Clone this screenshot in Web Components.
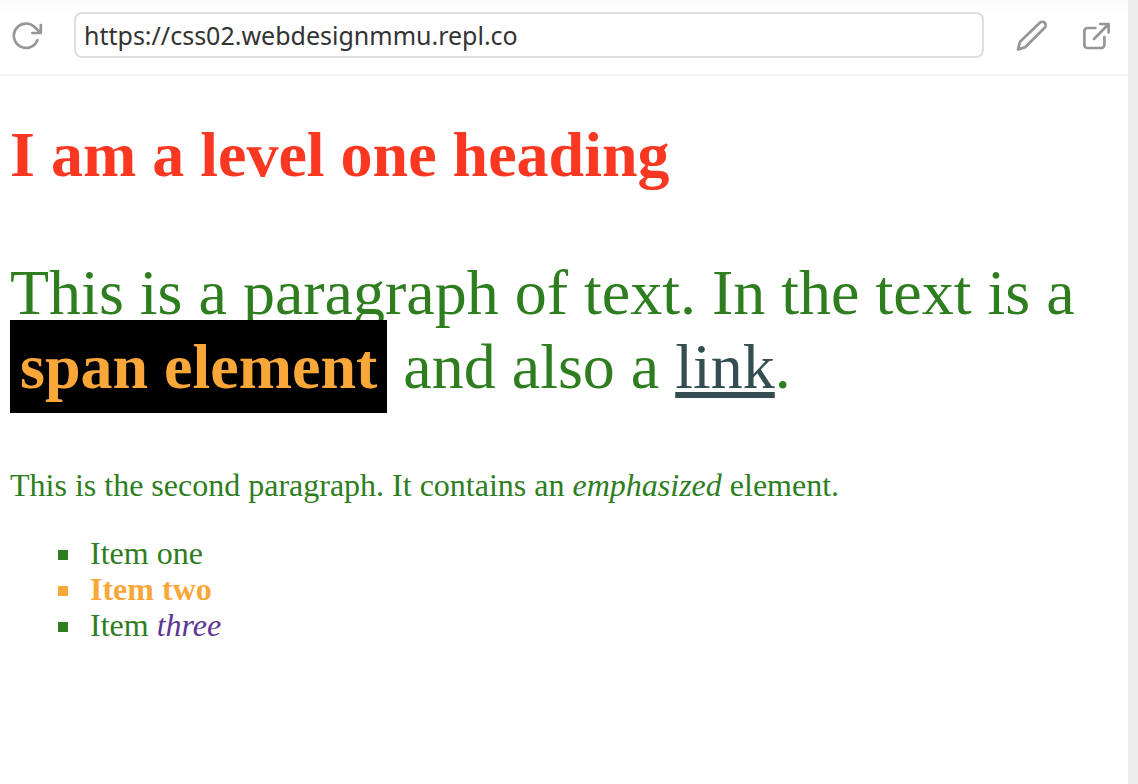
<!DOCTYPE html>
<html lang="en">
<head>
<meta charset="utf-8">
<title>Web preview</title>
<style>
html,body{margin:0;height:100%;background:#fff}
</style>
</head>
<body>
<preview-window>
  <address-bar slot="bar"></address-bar>
  <sample-document></sample-document>
</preview-window>
<script>
class PreviewWindow extends HTMLElement{
  constructor(){
    super();
    this.attachShadow({mode:'open'}).innerHTML=`
<style>
:host{display:flex;flex-direction:column;box-sizing:border-box;min-height:100vh;background:#fff;border-right:10px solid #ececec}
main{flex:1}
</style>
<slot name="bar"></slot><main><slot></slot></main>`;
  }
}
class AddressBar extends HTMLElement{
  constructor(){
    super();
    this.attachShadow({mode:'open'}).innerHTML=`
<style>
:host{display:block;border-bottom:2px solid #f2f2f2;background:linear-gradient(#fbfbfb,#fff 16px)}
form{display:flex;align-items:center;height:74px;box-sizing:border-box;padding:0 16px 4px 10px;margin:0}
input{flex:1;min-width:0;box-sizing:border-box;height:46px;margin:0 32px 0 30px;padding:0 8px;border:2px solid #dedede;border-radius:8px;background:#fff;color:#333;font:25px/40px "Noto Sans",sans-serif;outline:none}
button{display:flex;flex:none;padding:0;border:0;background:none;color:#969696}
.edit{margin-right:32px}
svg{display:block;fill:none;stroke:currentColor;stroke-width:2.7;stroke-linecap:round;stroke-linejoin:round}
</style>
<form>
<button type="button" aria-label="Reload"><svg width="34" height="34" viewBox="0 0 34 34"><path d="M27.4 22.2A12.2 12.2 0 1 1 24.6 9L30.4 14.6M30.8 7v8h-8.4"/></svg></button>
<input aria-label="Address" type="text" value="https://css02.webdesignmmu.repl.co" spellcheck="false">
<button class="edit" type="button" aria-label="Edit"><svg width="32" height="32" viewBox="0 0 32 32"><path d="M2 30.4L4 22.8L23.8 3.8a3.4 3.4 0 0 1 4.9 4.9L9.2 28.2z"/></svg></button>
<button type="button" aria-label="Open in new tab"><svg width="32" height="32" viewBox="0 0 32 32"><path d="M24.4 18v8a3 3 0 0 1-3 3H7.4a3 3 0 0 1-3-3V12a3 3 0 0 1 3-3h8M20.2 5H28.6V13.4M28.6 5L14 20"/></svg></button>
</form>`;
  }
}
class SampleDocument extends HTMLElement{
  constructor(){
    super();
    this.attachShadow({mode:'open'}).innerHTML=`
<style>
:host{display:block;padding:0 10px;font:32px/36px "Liberation Serif",serif;color:#2e7d1f}
h1{margin:42px 0 64px;font-size:64px;line-height:74px;color:#fa3822}
p{margin:0 0 32px}
.lead{font-size:64px;line-height:74px;margin-bottom:63px}
.lead span{padding:11px 10px;background:#000;color:#f9a738;font-weight:bold}
a{color:#334d50}
ul{margin:0;padding-left:48px;list-style:none}
li::before{content:"";display:inline-block;width:10px;height:10px;margin-right:22px;vertical-align:4px;background:currentColor}
.hot{color:#f9a738;font-weight:bold}
li em{color:#5b3696}
</style>
<h1>I am a level one heading</h1>
<p class="lead">This is a paragraph of text. In the text is a <span>span element</span> and also a <a href="#">link</a>.</p>
<p>This is the second paragraph. It contains an <em>emphasized</em> element.</p>
<ul><li>Item one</li><li class="hot">Item two</li><li>Item <em>three</em></li></ul>`;
  }
}
customElements.define('preview-window',PreviewWindow);
customElements.define('address-bar',AddressBar);
customElements.define('sample-document',SampleDocument);
</script>
</body>
</html>
